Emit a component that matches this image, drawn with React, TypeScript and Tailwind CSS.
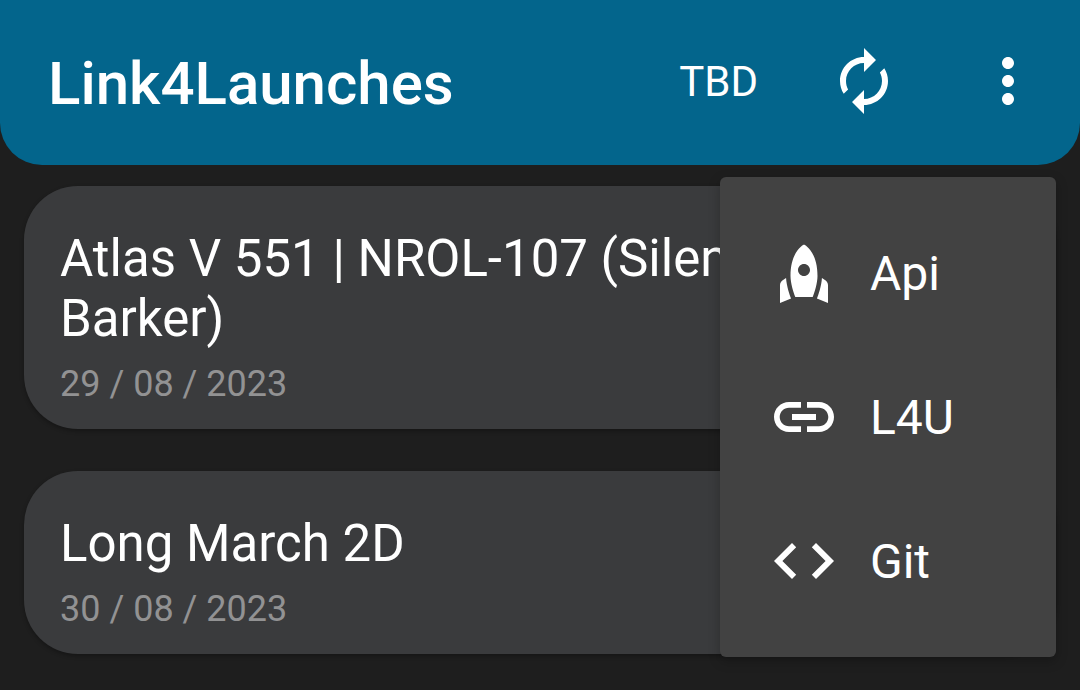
import React from "react";

const launches = [
  { name: "Atlas V 551 | NROL-107 (Silent Barker)", date: "29 / 08 / 2023", size: "h-[243px]" },
  { name: "Long March 2D", date: "30 / 08 / 2023", size: "h-[183px]" },
];

const menu = [
  { label: "Api", icon: "M12 2.5s4.5 2.04 4.5 10.5c0 2.49-1.04 5.57-1.6 7H9.1c-.56-1.43-1.6-4.51-1.6-7C7.5 4.54 12 2.5 12 2.5zm2 8.5c0-1.1-.9-2-2-2s-2 .9-2 2 .9 2 2 2 2-.9 2-2zm-6.31 9.52c-.48-1.23-1.52-4.17-1.67-6.87l-1.13.75c-.56.38-.89 1-.89 1.67V22l3.69-1.48zM20 22v-5.93c0-.67-.33-1.29-.89-1.66l-1.13-.75c-.15 2.69-1.2 5.64-1.67 6.87L20 22z" },
  { label: "L4U", icon: "M3.9 12c0-1.71 1.39-3.1 3.1-3.1h4V7H7c-2.76 0-5 2.24-5 5s2.24 5 5 5h4v-1.9H7c-1.71 0-3.1-1.39-3.1-3.1zM8 13h8v-2H8v2zm9-6h-4v1.9h4c1.71 0 3.1 1.39 3.1 3.1s-1.39 3.1-3.1 3.1h-4V17h4c2.76 0 5-2.24 5-5s-2.24-5-5-5z" },
  { label: "Git", icon: "M9.4 16.6L4.8 12l4.6-4.6L8 6l-6 6 6 6 1.4-1.4zm5.2 0l4.6-4.6-4.6-4.6L16 6l6 6-6 6-1.4-1.4z" },
];

function Icon({ d }: { d: string }) {
  return (
    <svg viewBox="0 0 24 24" className="size-[72px] shrink-0 fill-white" aria-hidden="true">
      <path fillRule="evenodd" d={d} />
    </svg>
  );
}

export default function App() {
  return (
    <div className="relative h-[690px] w-[1080px] overflow-hidden bg-[#1e1e1e] font-['Roboto',sans-serif] text-white">
      <header className="flex h-[165px] items-center rounded-b-[42px] bg-[#03658c] pb-[3px] pl-12 pr-9">
        <h1 className="grow pt-[5px] text-[60px] leading-[70px] font-medium">Link4Launches</h1>
        <span className="mr-[70px] pt-[2px] text-[42px] leading-[48px]">TBD</span>
        <Icon d="M12 6v3l4-4-4-4v3c-4.42 0-8 3.58-8 8 0 1.57.46 3.03 1.24 4.26L6.7 14.8c-.45-.83-.7-1.79-.7-2.8 0-3.31 2.69-6 6-6zm6.76 1.74L17.3 9.2c.44.84.7 1.79.7 2.8 0 3.31-2.69 6-6 6v-3l-4 4 4 4v-3c4.42 0 8-3.58 8-8 0-1.57-.46-3.03-1.24-4.26z" />
        <div className="ml-[72px]">
          <Icon d="M12 8c1.1 0 2-.9 2-2s-.9-2-2-2-2 .9-2 2 .9 2 2 2zm0 2c-1.1 0-2 .9-2 2s.9 2 2 2 2-.9 2-2-.9-2-2-2zm0 6c-1.1 0-2 .9-2 2s.9 2 2 2 2-.9 2-2-.9-2-2-2z" />
        </div>
      </header>
      <main className="flex flex-col gap-[42px] px-6 pt-[21px]">
        {launches.map((l) => (
          <article key={l.date} className={`${l.size} rounded-[54px] bg-[#3a3b3d] pl-9 pt-[43px] shadow-[0_2px_4px_rgba(0,0,0,0.3)]`}>
            <h2 className="w-[760px] text-[51px] leading-[60px]">{l.name}</h2>
            <p className="mt-[14px] text-[36px] leading-[42px] text-[#929293]">{l.date}</p>
          </article>
        ))}
      </main>
      <nav className="absolute left-[720px] top-[177px] flex h-[480px] w-[336px] flex-col rounded-[6px] bg-[#424242] py-6 shadow-[0_4px_12px_rgba(0,0,0,0.25)]">
        {menu.map((m) => (
          <a key={m.label} className="flex h-36 items-center gap-[30px] pl-12 text-[48px]">
            <Icon d={m.icon} />
            <span className="pt-[2px]">{m.label}</span>
          </a>
        ))}
      </nav>
    </div>
  );
}
